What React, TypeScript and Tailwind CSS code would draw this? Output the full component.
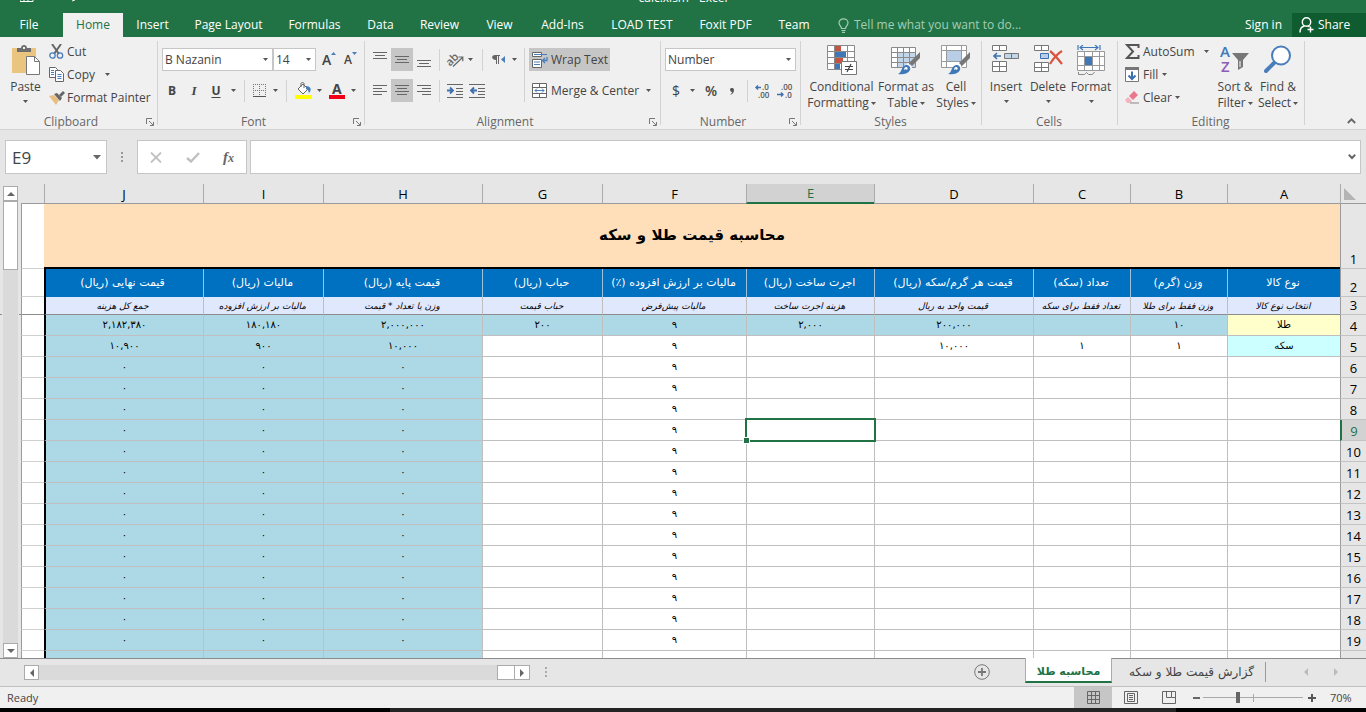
import { useState } from "react";
import type { ReactNode } from "react";
import clsx from "clsx";

const tabs = [
  { label: "Insert", width: "w-[59px]" },
  { label: "Page Layout", width: "w-[93px]" },
  { label: "Formulas", width: "w-[79px]" },
  { label: "Data", width: "w-[53px]" },
  { label: "Review", width: "w-[65px]" },
  { label: "View", width: "w-[55px]" },
  { label: "Add-Ins", width: "w-[71px]" },
  { label: "LOAD TEST", width: "w-[88px]" },
  { label: "Foxit PDF", width: "w-[79px]" },
  { label: "Team", width: "w-[58px]" },
];

const columns = [
  { id: "J", width: "w-[159px]", title: "قیمت نهایی (ریال)", hint: "جمع کل هزینه" },
  { id: "I", width: "w-[120px]", title: "مالیات (ریال)", hint: "مالیات بر ارزش افزوده" },
  { id: "H", width: "w-[159px]", title: "قیمت پایه (ریال)", hint: "وزن یا تعداد * قیمت" },
  { id: "G", width: "w-[120px]", title: "حباب (ریال)", hint: "حباب قیمت" },
  { id: "F", width: "w-[144px]", title: "مالیات بر ارزش افزوده (٪)", hint: "مالیات پیش‌فرض" },
  { id: "E", width: "w-[128px]", title: "اجرت ساخت (ریال)", hint: "هزینه اجرت ساخت" },
  { id: "D", width: "w-[159px]", title: "قیمت هر گرم/سکه (ریال)", hint: "قیمت واحد به ریال" },
  { id: "C", width: "w-[97px]", title: "تعداد (سکه)", hint: "تعداد فقط برای سکه" },
  { id: "B", width: "w-[97px]", title: "وزن (گرم)", hint: "وزن فقط برای طلا" },
  { id: "A", width: "w-[113px]", title: "نوع کالا", hint: "انتخاب نوع کالا" },
];

const emptyRow: Record<string, string> = { J: "۰", I: "۰", H: "۰", F: "۹" };

const filledRows: Record<number, Record<string, string>> = {
  4: { J: "۲,۱۸۲,۳۸۰", I: "۱۸۰,۱۸۰", H: "۲,۰۰۰,۰۰۰", G: "۲۰۰", F: "۹", E: "۲,۰۰۰", D: "۲۰۰,۰۰۰", B: "۱۰", A: "طلا" },
  5: { J: "۱۰,۹۰۰", I: "۹۰۰", H: "۱۰,۰۰۰", F: "۹", D: "۱۰,۰۰۰", C: "۱", B: "۱", A: "سکه" },
};

const rowNumbers = Array.from({ length: 17 }, (_, i) => i + 4);

const cellColor = (row: number, col: string) => {
  if (col === "A" && row === 4) return "bg-[#ffffcc]";
  if (col === "A" && row === 5) return "bg-[#ccffff]";
  if (row === 4 || col === "J" || col === "I" || col === "H") return "bg-[#add8e6]";
  return "bg-white";
};

const Caret = ({ className }: { className?: string }) => (
  <svg width="5" height="3" viewBox="0 0 5 3" className={clsx("shrink-0", className)} aria-hidden="true">
    <path d="M0 0h5L2.5 3z" fill="#555" />
  </svg>
);

const Divider = ({ className }: { className?: string }) => (
  <span className={clsx("w-px shrink-0 bg-[#d2d2d2]", className)} />
);

/* Ribbon building blocks */

const Group = ({
  label,
  width,
  launcher,
  children,
}: {
  label: string;
  width: string;
  launcher?: boolean;
  children: ReactNode;
}) => (
  <section aria-label={label} className={clsx("relative flex shrink-0 flex-col", width)}>
    <div className="flex h-[77px] pt-[3px]">{children}</div>
    <div className={clsx("text-center leading-[15px] text-[#666]", launcher ? "pr-4" : "pr-[2px]")}>{label}</div>
    {launcher && (
      <button aria-label={`${label} settings`} className="absolute bottom-[3px] right-[4px]">
        <svg width="8" height="8" viewBox="0 0 8 8" fill="none" stroke="#777">
          <path d="M.5 6V.5H6M3 3l4 4M7.5 4v3.5H4" />
        </svg>
      </button>
    )}
    <span className="absolute bottom-1 right-0 top-1 w-px bg-[#d2d2d2]" />
  </section>
);

const BigButton = ({
  icon,
  lines,
  width,
  caretBelow,
}: {
  icon: ReactNode;
  lines: string[];
  width: string;
  caretBelow?: boolean;
}) => (
  <button className={clsx("flex shrink-0 flex-col items-center whitespace-nowrap pt-1 leading-4", width)}>
    <span className="flex h-[34px] items-start">{icon}</span>
    <span>{lines[0]}</span>
    {caretBelow ? (
      <span className="flex h-[13px] items-center">
        <Caret />
      </span>
    ) : (
      <span className="flex items-center gap-[2px]">
        {lines[1]}
        <Caret />
      </span>
    )}
  </button>
);

const SmallButton = ({ icon, label, caret }: { icon: ReactNode; label: string; caret?: string }) => (
  <button className="flex h-[23px] items-center whitespace-nowrap">
    <span className="flex w-[18px] shrink-0">{icon}</span>
    {label}
    {caret && <Caret className={caret} />}
  </button>
);

const Lines = ({ rows, active, label }: { rows: string; active?: boolean; label: string }) => (
  <button
    aria-label={label}
    className={clsx("flex h-[23px] w-[22px] items-center justify-center", active && "bg-[#c6c6c6]")}
  >
    <svg width="16" height="16" viewBox="0 0 16 16" stroke="#666" fill="none">
      <path d={rows} />
    </svg>
  </button>
);

const Picker = ({ label, value, width }: { label: string; value: string; width: string }) => (
  <span className={clsx("relative flex h-[23px] border border-[#c6c6c6] bg-white", width)}>
    <select aria-label={label} defaultValue={value} className="w-full appearance-none bg-transparent pl-[2px] text-[#444] outline-none">
      <option>{value}</option>
    </select>
    <Caret className="pointer-events-none absolute right-[4px] top-[9px]" />
  </span>
);

/* Icons */

const PasteIcon = () => (
  <svg width="28" height="30" viewBox="0 0 28 30" fill="none">
    <path d="M0 3h24v25H0z" fill="#eac57f" />
    <path d="M5 7V3h4c0-4 6-4 6 0h4v4z" fill="#6d6d6d" />
    <path d="M11 2h2v2h-2z" fill="#f0f0f0" />
    <path d="M14.500 11.500h8l5 5v13h-13z" fill="#fff" stroke="#777" />
    <path d="M22.500 11.500v5h5" stroke="#777" />
  </svg>
);

const CutIcon = () => (
  <svg width="15" height="15" viewBox="0 0 15 15" fill="none">
    <path d="M3 0l7 10M12 0L5 10" stroke="#666" strokeWidth="2" />
    <circle cx="3.500" cy="11.500" r="2.700" stroke="#4a7ebb" strokeWidth="1.300" />
    <circle cx="11" cy="11.500" r="2.700" stroke="#4a7ebb" strokeWidth="1.300" />
  </svg>
);

const CopyIcon = () => (
  <svg width="16" height="15" viewBox="0 0 16 15" fill="#fff" stroke="#666">
    <path d="M.5.5h6l2 2v8h-8z" />
    <path d="M6.500 3.500h5l3 3v8h-8z" />
    <path d="M2 3.500h3M2 5.500h3M2 7.500h3M8.500 7.500h4M8.500 9.500h4M8.500 11.500h4" stroke="#4a7ebb" />
  </svg>
);

const PainterIcon = () => (
  <svg width="16" height="14" viewBox="0 0 16 14">
    <path d="M0 5l5-1 5 5-3 5z" fill="#e8bd80" />
    <path d="M5 3l3-1 5 5-2 3z" fill="#666" />
    <path d="M10 4l4-4 2 2-4 4z" fill="#666" />
  </svg>
);

const BordersIcon = () => (
  <svg width="13" height="13" viewBox="0 0 13 13" stroke="#777" fill="none">
    <path d="M0 .5h13M0 6.500h13M.5 0v13M6.500 0v13M12.500 0v13" strokeDasharray="1 1" />
    <path d="M0 12.500h13" stroke="#555" />
  </svg>
);

const FillColorIcon = () => (
  <svg width="17" height="17" viewBox="0 0 17 17" fill="none">
    <path d="M3 7l5-5 5 5-5 5z" fill="#fff" stroke="#666" />
    <path d="M6 5V1.500C6 .2 9 .2 9 1.500V6" stroke="#666" />
    <path d="M11 4c5 0 6 4 3 7-1-2 0-3-3-4z" fill="#4a7ebb" />
    <path d="M0 13h17v4H0z" fill="#ff0" />
  </svg>
);

const OrientationIcon = () => (
  <svg width="17" height="15" viewBox="0 0 17 15" fill="none" stroke="#666" overflow="visible">
    <path d="M6 14.500l9.500-9M11.500 5h4.300v4.300" strokeWidth="1.200" />
    <text x="-2" y="11" transform="rotate(-45 5 7)" fontSize="11" fontWeight="600" fill="#666" stroke="none">
      ab
    </text>
  </svg>
);

const IndentIcon = ({ outward }: { outward?: boolean }) => (
  <svg width="17" height="14" viewBox="0 0 17 14" fill="none" stroke="#666">
    <path d="M0 .5h16M9 4.500h7M9 7.500h7M9 10.500h7M0 13.500h16" />
    {outward ? (
      <path d="M8 6.500H2M5 3.500l-3 3 3 3" stroke="#3f6fae" strokeWidth="1.800" />
    ) : (
      <path d="M0 6.500h6M3 3.500l3 3-3 3" stroke="#3f6fae" strokeWidth="1.800" />
    )}
  </svg>
);

const WrapIcon = () => (
  <svg width="16" height="16" viewBox="0 0 16 16" fill="none" className="shrink-0">
    <path d="M.5.5h9v4h-9zM.5 7.500h9v8h-9z" fill="#fff" stroke="#666" />
    <path d="M2 2.500h13M2 10h6M2 12.500h6" stroke="#4a7ebb" />
    <path d="M15 5v3.500h-4M13 6l-2.500 2.500L13 11" stroke="#4a7ebb" strokeWidth="1.300" />
  </svg>
);

const MergeIcon = () => (
  <svg width="16" height="15" viewBox="0 0 16 15" fill="#fff" stroke="#666">
    <path d="M.5.5h14v14H.5zM.5 4.500h14M.5 10.500h14M7.500.5v4M7.500 10.500v4" />
    <path d="M3 7.500h9M5 5.500l-2 2 2 2M10 5.500l2 2-2 2" stroke="#4a7ebb" fill="none" />
  </svg>
);

const DecimalIcon = ({ less }: { less?: boolean }) => (
  <svg width="16" height="14" viewBox="0 0 16 14" fontSize="8" fontWeight="600" fill="#555" overflow="visible">
    <text x={less ? 4 : 7} y="6">{less ? ".00" : ".0"}</text>
    <text x={less ? 8 : 3} y="14">{less ? ".0" : ".00"}</text>
    {less ? (
      <path d="M0 10.500h6M4 8.500l2 2-2 2" stroke="#3f6fae" strokeWidth="1.400" fill="none" />
    ) : (
      <path d="M6 3.500H1M3 1.500l-2 2 2 2" stroke="#3f6fae" strokeWidth="1.400" fill="none" />
    )}
  </svg>
);

const ConditionalIcon = () => (
  <svg width="30" height="30" viewBox="0 0 30 30" fill="none">
    <path d="M.5.5h27v24H.5z" fill="#fff" />
    <path d="M8 1h6v5H8zM8 13h8v5H8z" fill="#c65241" />
    <path d="M8 7h11v5H8zM8 19h5v5H8z" fill="#3f78b8" />
    <path d="M.5.5h27v24H.5zM.5 6.500h27M.5 12.500h27M.5 18.500h27M7.500.5v24M20.500.5v24" stroke="#8a8a8a" />
    <path d="M14.500 16.500h15v13h-15z" fill="#fff" stroke="#777" />
    <path d="M18 21.500h8M18 24.500h8M24 19l-4 8" stroke="#444" strokeWidth="1.200" />
  </svg>
);

const Brush = () => (
  <>
    <path d="M29 7v6l-8 8-3-3z" fill="#777" />
    <path d="M17 18l4 4-1 2-5-4z" fill="#fff" />
    <path d="M15 20c3 0 5 2 4 5-2 4-7 5-12 4 4-1 3-8 8-9z" fill="#3f78b8" />
    <path d="M15 22c2 0 2 2 1 3-1-1-2-1-3 0 0-2 1-3 2-3z" fill="#fff" />
  </>
);

const TableStyleIcon = () => (
  <svg width="30" height="30" viewBox="0 0 30 30" fill="none">
    <path d="M.5 2.500h24v20H.5z" fill="#fff" />
    <path d="M7 8h17v14H7z" fill="#c3d5e8" />
    <path d="M.5 2.500h24v20H.5zM.5 7.500h24M.5 12.500h24M.5 17.500h24M6.500 2.500v20M12.500 2.500v20M18.500 2.500v20" stroke="#8a8a8a" />
    <Brush />
  </svg>
);

const CellStyleIcon = () => (
  <svg width="30" height="30" viewBox="0 0 30 30" fill="none">
    <path d="M.5.5h25v22H.5z" fill="#fff" />
    <path d="M6 6h14v10H6z" fill="#b8cee6" />
    <path d="M.5.5h25v22H.5zM.5 5.500h25M.5 16.500h25M5.500.5v22M20.500.5v22" stroke="#9a9a9a" />
    <Brush />
  </svg>
);

const InsertCellsIcon = () => (
  <svg width="28" height="28" viewBox="0 0 28 28" fill="#fff" stroke="#777">
    <path d="M.5.5h14v5H.5zM7.500.5v5M.5 16.500h14v10H.5zM.5 21.500h14M7.500 16.500v10" />
    <path d="M12.500 8.500h14v5h-14z" fill="#c3d5e8" />
    <path d="M19.500 8.500v5" />
    <path d="M9 11H2M5 8l-3 3 3 3" stroke="#3f6fae" strokeWidth="1.600" fill="none" />
  </svg>
);

const DeleteCellsIcon = () => (
  <svg width="29" height="28" viewBox="0 0 29 28" fill="#fff" stroke="#777">
    <path d="M.5.5h14v5H.5zM7.500.5v5M.5 17.500h14v9H.5zM.5 22.500h14M7.500 17.500v9" />
    <path d="M6.500 8.500h8v5h-8z" fill="#b8cee6" stroke="#3f6fae" />
    <path d="M16 6c4 3 8 8 12 13M28 6c-5 3-9 8-12 13" stroke="#d9553f" strokeWidth="2.200" fill="none" />
  </svg>
);

const FormatCellsIcon = () => (
  <svg width="29" height="31" viewBox="0 0 29 31" fill="none">
    <path d="M1 0v5M23 0v5M3 2.500h18M6 0L3 2.500 6 5M18 0l3 2.500L18 5" stroke="#3f78b8" strokeWidth="1.200" />
    <path d="M.5 6.500h27v19H.5z" fill="#fff" stroke="#999" />
    <path d="M.5 11.500h27M.5 20.500h27M7.500 6.500v19M15.500 6.500v19M22.500 6.500v19" stroke="#999" />
    <path d="M8 12h7v8H8z" fill="#3f78b8" />
    <path d="M1.500 27v2.500h6l2-2 2 2h4l2-2.500" stroke="#888" />
  </svg>
);

const SumIcon = () => (
  <svg width="15" height="15" viewBox="0 0 15 15" fill="none" stroke="#555" strokeWidth="2">
    <path d="M13.500 4V1H2l6 6.500L2 14h11.500v-3" />
  </svg>
);

const FillIcon = () => (
  <svg width="14" height="15" viewBox="0 0 14 15" fill="none">
    <path d="M.5.5h13v14H.5z" fill="#fff" stroke="#777" />
    <path d="M0 0h14v3H0z" fill="#777" />
    <path d="M7 4.500V12M3.500 8.500L7 12l3.500-3.500" stroke="#3f6fae" strokeWidth="2" />
  </svg>
);

const EraserIcon = () => (
  <svg width="15" height="13" viewBox="0 0 15 13">
    <path d="M4 5l5-5 4 4-5 5z" fill="#e8798c" />
    <path d="M3 6l4 4-2 2H2L0 9z" fill="#f4b3be" />
    <path d="M5 12h9" stroke="#888" />
  </svg>
);

const SortIcon = () => (
  <svg width="30" height="30" viewBox="0 0 30 30" overflow="visible">
    <text x="0" y="12" fontSize="15" fontWeight="600" fill="#3f78b8">A</text>
    <text x="1" y="27" fontSize="15" fontWeight="600" fill="#8e5bb8">Z</text>
    <path d="M12 8h17l-6 7v7l-5 3v-10z" fill="#777" />
    <path d="M20 16v6" stroke="#fff" />
  </svg>
);

const FindIcon = () => (
  <svg width="28" height="30" viewBox="0 0 28 30" fill="none" stroke="#4a7ebb">
    <path d="M10 18L2 26" strokeWidth="4" strokeLinecap="round" />
    <circle cx="17" cy="10.500" r="9" fill="#fff" strokeWidth="2" />
  </svg>
);

const Triangle = ({ d, color = "#666" }: { d: string; color?: string }) => (
  <svg width="8" height="8" viewBox="0 0 8 8" aria-hidden="true">
    <path d={d} fill={color} />
  </svg>
);

/* Window sections */

const Header = () => (
  <header className="bg-[#217346] text-white">
    <div className="relative h-[13px] overflow-hidden">
      <svg width="100" height="3" className="absolute left-5 top-0" viewBox="0 0 100 3" fill="none" stroke="#fff">
        <path d="M0 0v1.500h13V0M4 0v2M8 0v2M52 1l3-1" />
      </svg>
      <p className="-mt-[10px] text-center leading-4">calc.xlsm - Excel</p>
    </div>
    <nav className="flex h-6 items-center">
      <button className="w-[58px] text-center">File</button>
      <button className="ml-[5px] h-full w-[60px] bg-[#f0f0f0] text-[#217346]">Home</button>
      {tabs.map((tab) => (
        <button key={tab.label} className={clsx("h-full shrink-0 whitespace-nowrap text-center", tab.width)}>
          {tab.label}
        </button>
      ))}
      <button className="ml-[15px] flex items-center gap-[5px] whitespace-nowrap text-[#a3cdb4]">
        <svg width="11" height="15" viewBox="0 0 11 15" fill="none" stroke="#a3cdb4" strokeWidth="1.200">
          <path d="M3.500 10.500C3.500 8 1 7.500 1 4.800 1 2.500 3 .8 5.500.8S10 2.500 10 4.800c0 2.700-2.500 3.200-2.500 5.700zM3.500 12.500h4M4 14.300h3" />
        </svg>
        Tell me what you want to do...
      </button>
      <button className="ml-auto mr-[10px]">Sign in</button>
      <button className="flex h-full w-[74px] items-center gap-1 bg-[#0e5c2f] pl-[7px]">
        <svg width="15" height="16" viewBox="0 0 15 16" fill="none" stroke="#fff" strokeWidth="1.400">
          <circle cx="7.500" cy="5" r="4.200" />
          <path d="M1 15.500c0-4 2-6 4.500-6.500M9 9l1.500 1M11.500 9.500v6M8.500 12.500h6" />
        </svg>
        Share
      </button>
    </nav>
  </header>
);

const Ribbon = () => (
  <div className="relative flex h-[93px] border-b border-[#d2d2d2] bg-[#f0f0f0] text-[#444]">
    <Group label="Clipboard" width="w-[158px]" launcher>
      <div className="flex pl-[2px] pt-px">
        <BigButton icon={<PasteIcon />} lines={["Paste"]} width="w-[47px]" caretBelow />
      </div>
      <div className="flex flex-col">
        <SmallButton icon={<CutIcon />} label="Cut" />
        <SmallButton icon={<CopyIcon />} label="Copy" caret="ml-[10px]" />
        <SmallButton icon={<PainterIcon />} label="Format Painter" />
      </div>
    </Group>

    <Group label="Font" width="w-[207px]" launcher>
      <div className="flex flex-col gap-2 pl-1 pt-2">
        <div className="flex items-center">
          <Picker label="Font name" value="B Nazanin" width="w-[111px]" />
          <Picker label="Font size" value="14" width="w-[43px]" />
          <button aria-label="Increase font size" className="relative ml-[6px] w-[14px] text-left text-[14px] font-semibold">
            A
            <svg width="5" height="3" className="absolute right-0 top-0" viewBox="0 0 5 3">
              <path d="M0 3h5L2.500 0z" fill="#4a7ebb" />
            </svg>
          </button>
          <button aria-label="Decrease font size" className="relative ml-2 w-[13px] text-left font-semibold">
            A
            <svg width="5" height="3" className="absolute right-0 top-0" viewBox="0 0 5 3">
              <path d="M0 0h5L2.500 3z" fill="#4a7ebb" />
            </svg>
          </button>
        </div>
        <div className="flex h-[23px] items-center">
          <button className="w-5 font-bold">B</button>
          <button className="w-6 font-['Liberation_Serif',serif] text-[13px] font-bold italic">I</button>
          <button className="w-5 font-bold underline underline-offset-2">U</button>
          <Caret className="ml-[5px]" />
          <Divider className="ml-2 h-[22px]" />
          <button aria-label="Borders" className="ml-2 flex items-center gap-[7px]">
            <BordersIcon />
            <Caret />
          </button>
          <Divider className="ml-2 h-[22px]" />
          <button aria-label="Fill color" className="ml-2 flex items-center gap-[5px]">
            <FillColorIcon />
            <Caret />
          </button>
          <button className="ml-[7px] h-[17px] border-b-4 border-[#f00018] px-[3px] text-[14px] font-bold leading-[13px]">A</button>
          <Caret className="ml-[6px]" />
        </div>
      </div>
    </Group>

    <Group label="Alignment" width="w-[296px]" launcher>
      <div className="flex flex-col gap-2 pl-1 pt-2">
        <div className="flex h-[23px] items-center">
          <Lines label="Top align" rows="M1 .5h14M3 3.500h10M1 6.500h14" />
          <Lines label="Middle align" rows="M1 4.500h14M3 7.500h10M1 10.500h14" active />
          <Lines label="Bottom align" rows="M1 8.500h14M3 11.500h10M1 14.500h14" />
          <Divider className="ml-1 h-[22px]" />
          <button aria-label="Orientation" className="ml-[7px] flex items-center gap-1">
            <OrientationIcon />
            <Caret />
          </button>
          <Divider className="ml-[9px] h-[22px]" />
          <button aria-label="Text direction" className="ml-[9px] flex items-center gap-[7px]">
            <svg width="13" height="10" viewBox="0 0 13 10">
              <path d="M3 0h5v1H7v8H6V1H5v8H4V5C-1 5-1 0 3 0z" fill="#666" />
              <path d="M13 1v7L9 4.500z" fill="#4a7ebb" />
            </svg>
            <Caret />
          </button>
        </div>
        <div className="flex h-[23px] items-center">
          <Lines label="Align left" rows="M1 2.500h14M1 5.500h9M1 8.500h14M1 11.500h9" />
          <Lines label="Align center" rows="M1 2.500h14M3 5.500h10M1 8.500h14M3 11.500h10" active />
          <Lines label="Align right" rows="M1 2.500h14M6 5.500h9M1 8.500h14M6 11.500h9" />
          <Divider className="ml-1 h-[22px]" />
          <button aria-label="Decrease indent" className="ml-[7px]"><IndentIcon /></button>
          <button aria-label="Increase indent" className="ml-[5px]"><IndentIcon outward /></button>
        </div>
      </div>
      <Divider className="ml-[7px] mt-2 h-[54px]" />
      <div className="flex flex-col items-start gap-2 pl-1 pt-2">
        <button className="flex h-[23px] w-[81px] items-center gap-[3px] whitespace-nowrap bg-[#c6c6c6] pl-[3px]">
          <WrapIcon />
          Wrap Text
        </button>
        <button className="flex h-[23px] items-center gap-[3px] whitespace-nowrap pl-[3px]">
          <MergeIcon />
          Merge &amp; Center
          <Caret className="ml-1" />
        </button>
      </div>
    </Group>

    <Group label="Number" width="w-[140px]" launcher>
      <div className="flex flex-col gap-2 pl-1 pt-2">
        <Picker label="Number format" value="Number" width="w-[131px]" />
        <div className="flex h-[23px] items-center">
          <button className="w-[22px] text-[14px]">$</button>
          <Caret className="ml-[3px]" />
          <button className="ml-[6px] w-[20px] text-[14px] font-semibold">%</button>
          <button aria-label="Comma style" className="w-[20px] pl-2">
            <svg width="6" height="8" viewBox="0 0 6 8">
              <path d="M1 2.500C1 .5 5 .3 5 3c0 2.500-1.500 4.500-4 5 1-1 2-2 2-3C2 5 1 4 1 2.500z" fill="#555" />
            </svg>
          </button>
          <Divider className="ml-[6px] h-[22px]" />
          <button aria-label="Increase decimal" className="ml-[7px]"><DecimalIcon /></button>
          <button aria-label="Decrease decimal" className="ml-[6px]"><DecimalIcon less /></button>
        </div>
      </div>
    </Group>

    <Group label="Styles" width="w-[181px]">
      <div className="flex pl-1 pt-px">
        <BigButton icon={<ConditionalIcon />} lines={["Conditional", "Formatting"]} width="w-[73px]" />
        <BigButton icon={<TableStyleIcon />} lines={["Format as", "Table"]} width="w-[56px]" />
        <BigButton icon={<CellStyleIcon />} lines={["Cell", "Styles"]} width="w-[44px]" />
      </div>
    </Group>

    <Group label="Cells" width="w-[136px]">
      <div className="flex pl-[3px] pt-px">
        <BigButton icon={<InsertCellsIcon />} lines={["Insert"]} width="w-[42px]" caretBelow />
        <BigButton icon={<DeleteCellsIcon />} lines={["Delete"]} width="w-[42px]" caretBelow />
        <BigButton icon={<FormatCellsIcon />} lines={["Format"]} width="w-[44px]" caretBelow />
      </div>
    </Group>

    <Group label="Editing" width="w-[187px]">
      <div className="flex w-[96px] flex-col pl-[7px]">
        <SmallButton icon={<SumIcon />} label="AutoSum" caret="ml-[9px]" />
        <SmallButton icon={<FillIcon />} label="Fill" caret="ml-[4px]" />
        <SmallButton icon={<EraserIcon />} label="Clear" caret="ml-[3px]" />
      </div>
      <div className="flex pt-px">
        <BigButton icon={<SortIcon />} lines={["Sort &", "Filter"]} width="w-[42px]" />
        <BigButton icon={<FindIcon />} lines={["Find &", "Select"]} width="w-[44px]" />
      </div>
    </Group>

    <button aria-label="Collapse ribbon" className="ml-auto mr-[10px] self-end pb-[5px]">
      <svg width="9" height="6" viewBox="0 0 9 6" fill="none" stroke="#666" strokeWidth="1.800">
        <path d="M.8 5l3.700-3.700L8.200 5" />
      </svg>
    </button>
  </div>
);

const FormulaBar = () => (
  <div className="flex h-[54px] items-start pl-[5px] pr-[5px] pt-[10px]">
    <div className="flex h-[34px] w-[102px] items-center border border-[#c6c6c6] bg-white pr-[5px]">
      <input aria-label="Name box" defaultValue="E9" className="w-full min-w-0 bg-transparent pl-[6px] text-[17px] text-[#444] outline-none" />
      <svg width="8" height="5" viewBox="0 0 8 5" className="shrink-0">
        <path d="M0 0h8L4 4.500z" fill="#666" />
      </svg>
    </div>
    <svg width="2" height="10" viewBox="0 0 2 10" className="ml-[14px] mt-3" fill="#999">
      <path d="M0 0h2v2H0zM0 4h2v2H0zM0 8h2v2H0z" />
    </svg>
    <div className="ml-[14px] flex h-[34px] w-[110px] items-center justify-between border border-[#c6c6c6] bg-white px-3">
      <button aria-label="Cancel">
        <svg width="12" height="11" viewBox="0 0 12 11" stroke="#c0c0c0" strokeWidth="1.800">
          <path d="M1 .5l10 10M11 .5l-10 10" />
        </svg>
      </button>
      <button aria-label="Enter">
        <svg width="14" height="11" viewBox="0 0 14 11" fill="none" stroke="#c0c0c0" strokeWidth="2.400">
          <path d="M1 6l4 3.500L13 1" />
        </svg>
      </button>
      <button aria-label="Insert function" className="font-['Liberation_Serif',serif] text-[15px] font-bold italic text-[#666]">
        f<span className="text-[12px]">x</span>
      </button>
    </div>
    <div className="ml-[3px] flex h-[34px] flex-1 items-center border border-[#c6c6c6] bg-white pr-1">
      <input aria-label="Formula" className="min-w-0 flex-1 bg-transparent px-2 outline-none" />
      <svg width="8" height="6" viewBox="0 0 8 6" fill="none" stroke="#666" strokeWidth="2">
        <path d="M.8.800L4 4 7.200.8" />
      </svg>
    </div>
  </div>
);

const rowHead =
  "border-b border-l border-b-[#c4c4c4] border-l-[#9b9b9b] p-0 pb-px text-center align-bottom font-['Open_Sans',sans-serif] text-[13px] font-normal leading-4";

const Sheet = () => {
  const [selected, setSelected] = useState({ row: 9, col: "E" });

  return (
    <main className="relative flex min-h-0 flex-1 overflow-hidden border-b border-[#8c8c8c]">
      {/* Frozen pane line where it crosses the scroll bar margins */}
      <span className="absolute left-0 top-[130px] h-px w-[2px] bg-[#8c8c8c]" />
      <span className="absolute left-[19px] top-[130px] h-px w-[2px] bg-[#8c8c8c]" />

      {/* Vertical scroll bar */}
      <div className="flex w-[21px] shrink-0 flex-col px-[3px] pt-[2px]">
        <button aria-label="Scroll up" className="flex h-[15px] items-center justify-center border border-[#ababab] bg-white">
          <Triangle d="M0 6h8L4 2z" />
        </button>
        <div className="flex-1 bg-[#dadada]">
          <div className="h-[69px] border border-[#ababab] bg-white" />
        </div>
        <button aria-label="Scroll down" className="flex h-[15px] items-center justify-center border border-[#ababab] bg-white">
          <Triangle d="M0 2h8L4 6z" />
        </button>
      </div>

      <div className="min-w-0 flex-1 overflow-hidden">
        <table className="w-full table-fixed border-separate border-spacing-0 font-['DejaVu_Sans',sans-serif] text-black">
          <colgroup>
            <col />
            {columns.map((c) => (
              <col key={c.id} className={c.width} />
            ))}
            <col className="w-[26px]" />
          </colgroup>
          <thead className="font-['Open_Sans','Noto_Sans',sans-serif]">
            <tr className="h-5">
              <th className="border-b border-[#9b9b9b]" />
              {columns.map((c) => (
                <th
                  key={c.id}
                  className={clsx(
                    "border-l border-l-[#ababab] p-0 text-[13px] font-normal leading-4",
                    c.id === selected.col
                      ? "border-b-2 border-b-[#217346] bg-[#d2d2d2] text-[#217346]"
                      : "border-b border-b-[#9b9b9b]"
                  )}
                >
                  {c.id}
                </th>
              ))}
              <th className="border-b border-l border-b-[#9b9b9b] border-l-[#ababab] p-0">
                <svg width="12" height="12" viewBox="0 0 12 12" className="ml-[3px]" role="img" aria-label="Select all">
                  <path d="M0 0v12h12z" fill="#b4b4b4" />
                </svg>
              </th>
            </tr>
          </thead>
          <tbody>
            <tr className="h-[65px]">
              <td className="border-b border-l border-b-[#d0d0d0] border-l-[#9b9b9b] bg-white" />
              <td colSpan={10} dir="rtl" className="border-b-2 border-black bg-[#ffdfba] p-0 pb-[2px] text-center text-[15px] font-bold">
                محاسبه قیمت طلا و سکه
              </td>
              <th className={rowHead}>1</th>
            </tr>
            <tr className="h-7">
              <td className="border-b border-l border-b-[#d0d0d0] border-l-[#9b9b9b] bg-white" />
              {columns.map((c) => (
                <th
                  key={c.id}
                  dir="rtl"
                  className={clsx(
                    "whitespace-nowrap bg-[#0070c0] p-0 text-[11px] font-normal leading-4 text-white",
                    c.id === "J" ? "border-l-2 border-black" : "border-l border-[#9fc3de]"
                  )}
                >
                  {c.title}
                </th>
              ))}
              <th className={rowHead}>2</th>
            </tr>
            <tr className="h-[18px]">
              <td className="border-b border-l border-b-[#8c8c8c] border-l-[#9b9b9b] bg-white p-0" />
              {columns.map((c) => (
                <td
                  key={c.id}
                  dir="rtl"
                  className={clsx(
                    "whitespace-nowrap border-b border-b-[#8c8c8c] bg-[#e0e8fe] p-0 text-center text-[9px] italic leading-4",
                    c.id === "J" ? "border-l-2 border-l-black" : "border-l border-l-[#bfbfbf]"
                  )}
                >
                  {c.hint}
                </td>
              ))}
              <th className={rowHead}>3</th>
            </tr>
            {rowNumbers.map((row) => (
              <tr key={row} className="h-[21px]">
                <td className="border-b border-l border-b-[#d0d0d0] border-l-[#9b9b9b] bg-white p-0" />
                {columns.map((c) => {
                  const active = selected.row === row && selected.col === c.id;
                  return (
                    <td
                      key={c.id}
                      onClick={() => setSelected({ row, col: c.id })}
                      className={clsx(
                        "relative border-b border-b-[#bfbfbf] p-0 text-center text-[10px] leading-4",
                        c.id === "J" ? "border-l-2 border-l-black" : "border-l border-l-[#bfbfbf]",
                        cellColor(row, c.id)
                      )}
                    >
                      {(filledRows[row] ?? emptyRow)[c.id]}
                      {active && (
                        <span className="absolute -bottom-[2px] -left-[2px] -right-[2px] -top-[2px] z-10 border-2 border-[#217346]">
                          <span className="absolute -bottom-[4px] -left-[4px] size-[7px] border border-white bg-[#217346]" />
                        </span>
                      )}
                    </td>
                  );
                })}
                <th
                  className={clsx(
                    rowHead,
                    row === selected.row && "border-l-2 border-l-[#217346] bg-[#d2d2d2] text-[#217346]"
                  )}
                >
                  {row}
                </th>
              </tr>
            ))}
          </tbody>
        </table>
      </div>
    </main>
  );
};

const SheetTabs = () => (
  <div className="flex h-[27px] items-start pl-6">
    <div className="mt-[6px] flex h-[15px] w-[506px] bg-[#dadada]">
      <button aria-label="Scroll left" className="flex w-[15px] items-center justify-center border border-[#ababab] bg-white">
        <Triangle d="M6 0v8L2 4z" />
      </button>
      <div className="ml-auto w-[18px] border border-[#ababab] bg-white" />
      <button aria-label="Scroll right" className="-ml-px flex w-[16px] items-center justify-center border border-[#ababab] bg-white">
        <Triangle d="M2 0v8l4-4z" />
      </button>
    </div>
    <svg width="2" height="10" viewBox="0 0 2 10" className="ml-[15px] mt-2" fill="#aaa">
      <path d="M0 0h2v2H0zM0 4h2v2H0zM0 8h2v2H0z" />
    </svg>
    <button aria-label="New sheet" className="ml-auto mt-[5px]">
      <svg width="16" height="16" viewBox="0 0 16 16" fill="none" stroke="#777">
        <circle cx="8" cy="8" r="7.300" />
        <path d="M8 4v8M4 8h8" strokeWidth="1.800" />
      </svg>
    </button>
    <button
      dir="rtl"
      className="relative -mt-px ml-[35px] h-[25px] w-[87px] whitespace-nowrap border-x border-b-2 border-x-[#ababab] border-b-[#217346] bg-white pt-1 font-['DejaVu_Sans',sans-serif] text-[11px] font-bold text-[#217346]"
    >
      محاسبه طلا
    </button>
    <button
      dir="rtl"
      className="mt-[3px] h-5 w-[154px] whitespace-nowrap border-r border-[#9b9b9b] pr-[11px] text-right font-['DejaVu_Sans',sans-serif] text-[#444]"
    >
      گزارش قیمت طلا و سکه
    </button>
    <button aria-label="Previous sheet" className="ml-[36px] mt-[9px]">
      <Triangle d="M6 0v8L2 4z" color="#bbb" />
    </button>
    <button aria-label="Next sheet" className="ml-[22px] mr-[26px] mt-[9px]">
      <Triangle d="M2 0v8l4-4z" color="#bbb" />
    </button>
  </div>
);

const StatusBar = () => (
  <footer>
    <div className="flex h-[22px] items-center border-t border-[#c0c0c0] bg-[#f0f0f0] pl-[7px] text-[#444]">
      <span className="text-[11px]">Ready</span>
      <button aria-label="Normal view" className="ml-auto flex h-full w-[38px] items-center justify-center bg-[#c6c6c6]">
        <svg width="13" height="13" viewBox="0 0 13 13" fill="none" stroke="#666">
          <path d="M.5.5h12v12H.5zM.5 4.500h12M.5 8.500h12M4.500.5v12M8.500.5v12" />
        </svg>
      </button>
      <button aria-label="Page layout view" className="flex h-full w-[38px] items-center justify-center">
        <svg width="14" height="13" viewBox="0 0 14 13" fill="none" stroke="#666">
          <path d="M.5.5h13v12H.5zM3.500 2.500h7v8h-7zM5 4.500h4M5 6.500h4M5 8.500h4" />
        </svg>
      </button>
      <button aria-label="Page break view" className="flex h-full w-[38px] items-center justify-center">
        <svg width="14" height="13" viewBox="0 0 14 13" fill="none" stroke="#666">
          <path d="M.5.5h13v12H.5zM4.500.5v6h5v-6M9.500 6.500h4" />
        </svg>
      </button>
      <button aria-label="Zoom out" className="ml-[5px] flex h-full w-[10px] items-center">
        <span className="h-[2px] w-[7px] bg-[#666]" />
      </button>
      <span className="relative flex items-center">
        <span className="absolute left-[50px] h-2 w-px bg-[#aaa]" />
        <input
          type="range"
          aria-label="Zoom"
          defaultValue={34}
          className="relative h-[11px] w-[100px] appearance-none bg-[linear-gradient(#aaa,#aaa)] bg-[length:100%_1px] bg-center bg-no-repeat [&::-webkit-slider-thumb]:h-[11px] [&::-webkit-slider-thumb]:w-1 [&::-webkit-slider-thumb]:appearance-none [&::-webkit-slider-thumb]:bg-[#666]"
        />
      </span>
      <button aria-label="Zoom in" className="ml-[5px]">
        <svg width="8" height="8" viewBox="0 0 8 8" stroke="#555" strokeWidth="2">
          <path d="M4 0v8M0 4h8" />
        </svg>
      </button>
      <span className="ml-[14px] w-9 text-[11px]">70%</span>
    </div>
    <div className="flex h-1 bg-[#242424]">
      <span className="w-[390px] bg-black" />
      <span className="ml-auto w-[190px] bg-black" />
    </div>
  </footer>
);

const App = () => (
  <div className="flex h-screen min-h-[480px] w-full flex-col overflow-hidden bg-[#e6e6e6] font-['Open_Sans','Noto_Sans',sans-serif] text-[12px] leading-4">
    <Header />
    <Ribbon />
    <FormulaBar />
    <Sheet />
    <SheetTabs />
    <StatusBar />
  </div>
);

export default App;
